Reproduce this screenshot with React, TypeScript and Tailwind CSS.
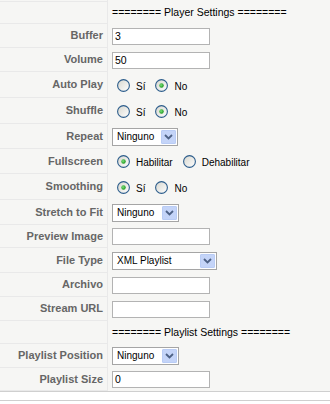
import React from 'react';

type Field =
  | { kind: 'header'; text: string; h: string }
  | { kind: 'text'; label: string; value: string; h: string }
  | { kind: 'radio'; label: string; options: string[]; checked: number; h: string }
  | { kind: 'select'; label: string; value: string; w: string; h: string };

const fields: Field[] = [
  { kind: 'header', text: '======== Player Settings ========', h: 'h-[22px]' },
  { kind: 'text', label: 'Buffer', value: '3', h: 'h-[24px]' },
  { kind: 'text', label: 'Volume', value: '50', h: 'h-[24px]' },
  { kind: 'radio', label: 'Auto Play', options: ['Sí', 'No'], checked: 1, h: 'h-[26px]' },
  { kind: 'radio', label: 'Shuffle', options: ['Sí', 'No'], checked: 1, h: 'h-[26px]' },
  { kind: 'select', label: 'Repeat', value: 'Ninguno', w: 'w-[66px]', h: 'h-[25px]' },
  { kind: 'radio', label: 'Fullscreen', options: ['Habilitar', 'Dehabilitar'], checked: 0, h: 'h-[25px]' },
  { kind: 'radio', label: 'Smoothing', options: ['Sí', 'No'], checked: 0, h: 'h-[26px]' },
  { kind: 'select', label: 'Stretch to Fit', value: 'Ninguno', w: 'w-[67px]', h: 'h-[25px]' },
  { kind: 'text', label: 'Preview Image', value: '', h: 'h-[23px]' },
  { kind: 'select', label: 'File Type', value: 'XML Playlist', w: 'w-[105px]', h: 'h-[25px]' },
  { kind: 'text', label: 'Archivo', value: '', h: 'h-[24px]' },
  { kind: 'text', label: 'Stream URL', value: '', h: 'h-[24px]' },
  { kind: 'header', text: '======== Playlist Settings ========', h: 'h-[23px]' },
  { kind: 'select', label: 'Playlist Position', value: 'Ninguno', w: 'w-[67px]', h: 'h-[24px]' },
  { kind: 'text', label: 'Playlist Size', value: '0', h: 'h-[23px]' },
];

function Radio({ on }: { on: boolean }) {
  return (
    <svg width="13" height="13" viewBox="0 0 13 13" className="shrink-0">
      <defs>
        <linearGradient id="rg" x1="0" y1="0" x2="1" y2="1">
          <stop offset="0" stopColor="#d6d6ce" />
          <stop offset="1" stopColor="#ffffff" />
        </linearGradient>
        <radialGradient id="dot" cx="0.4" cy="0.4" r="0.6">
          <stop offset="0" stopColor="#7ee07e" />
          <stop offset="1" stopColor="#1e9a1e" />
        </radialGradient>
      </defs>
      <circle cx="6.5" cy="6.5" r="5.9" fill="url(#rg)" stroke="#2c5d8c" strokeWidth="1.1" />
      {on && <circle cx="6.5" cy="6.5" r="2.2" fill="url(#dot)" />}
    </svg>
  );
}

function Select({ value, w }: { value: string; w: string }) {
  return (
    <div className={`${w} h-[18px] flex items-center border border-[#a5a5a5] bg-white pl-[4px] pr-[1px]`}>
      <span className="flex-1 text-[10px] text-black leading-none">{value}</span>
      <span className="w-[15px] h-[14px] flex items-center justify-center bg-[#c4d4f8] border border-[#b9ccf5] rounded-[1px]">
        <svg width="9" height="6" viewBox="0 0 9 6">
          <path d="M1 1 L4.5 4.5 L8 1" fill="none" stroke="#4d6185" strokeWidth="1.8" />
        </svg>
      </span>
    </div>
  );
}

export default function App() {
  return (
    <div className="w-[330px] h-[404px] bg-white overflow-hidden" style={{ fontFamily: '"Liberation Sans", Arial, sans-serif' }}>
      <div className="bg-[#f6f6f4]">
        <div className="flex h-[2px]">
          <div className="w-[108px] border-b border-r border-[#e9e9e9]" />
        </div>
        {fields.map((f, i) => (
          <div key={i} className={`flex ${f.h}`}>
            <div className="w-[108px] shrink-0 border-b border-r border-[#e9e9e9] flex items-center justify-end pr-[4px] text-[11px] font-bold text-[#666]">
              {f.kind === 'header' ? '' : f.label}
            </div>
            <div className="flex-1 flex items-center pl-[4px] text-[10px] text-black">
              {f.kind === 'header' && <span className="text-[10.5px]">{f.text}</span>}
              {f.kind === 'text' && (
                <div className="w-[98px] h-[17px] border border-[#b3b3b3] bg-white pl-[2px] flex items-center text-[10.5px] leading-none">
                  {f.value}
                </div>
              )}
              {f.kind === 'select' && <Select value={f.value} w={f.w} />}
              {f.kind === 'radio' && (
                <div className="flex items-center pl-[5px]">
                  {f.options.map((o, j) => (
                    <React.Fragment key={o}>
                      <Radio on={f.checked === j} />
                      <span className={`ml-[6px] ${j === 0 ? 'mr-[10px]' : ''} translate-y-[1px]`}>{o}</span>
                    </React.Fragment>
                  ))}
                </div>
              )}
            </div>
          </div>
        ))}
      </div>
      <div className="h-[10px] border-y border-[#cfcfcf] bg-white" />
    </div>
  );
}
